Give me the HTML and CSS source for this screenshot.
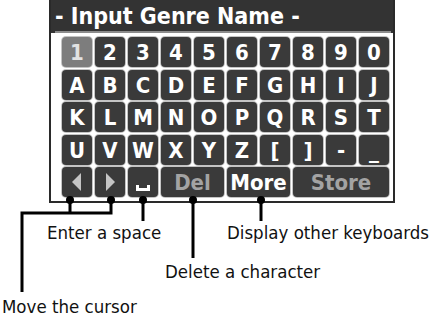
FILE: index.html
```html
<!DOCTYPE html>
<html lang="en">
<head>
  <meta charset="UTF-8" />
  <title>Input Genre Name</title>
  <link rel="stylesheet" href="styles.css">
</head>
<body>

  <div class="figure">

    <!-- Keyboard screen -->
    <div class="screen">
      <div class="title"><span class="title-text">- Input Genre Name -</span></div>

      <div class="keys">
        <div class="key selected">1</div>
        <div class="key">2</div>
        <div class="key">3</div>
        <div class="key">4</div>
        <div class="key">5</div>
        <div class="key">6</div>
        <div class="key">7</div>
        <div class="key">8</div>
        <div class="key">9</div>
        <div class="key">0</div>

        <div class="key">A</div>
        <div class="key">B</div>
        <div class="key">C</div>
        <div class="key">D</div>
        <div class="key">E</div>
        <div class="key">F</div>
        <div class="key">G</div>
        <div class="key">H</div>
        <div class="key">I</div>
        <div class="key">J</div>

        <div class="key">K</div>
        <div class="key">L</div>
        <div class="key">M</div>
        <div class="key">N</div>
        <div class="key">O</div>
        <div class="key">P</div>
        <div class="key">Q</div>
        <div class="key">R</div>
        <div class="key">S</div>
        <div class="key">T</div>

        <div class="key">U</div>
        <div class="key">V</div>
        <div class="key">W</div>
        <div class="key">X</div>
        <div class="key">Y</div>
        <div class="key">Z</div>
        <div class="key">[</div>
        <div class="key">]</div>
        <div class="key">-</div>
        <div class="key underscore">_</div>

        <div class="key icon">
          <svg width="10" height="18" viewBox="0 0 10 18"><polygon points="9,0 9,18 0,9" fill="#c4c4c4"/></svg>
        </div>
        <div class="key icon">
          <svg width="10" height="18" viewBox="0 0 10 18"><polygon points="1,0 1,18 10,9" fill="#c4c4c4"/></svg>
        </div>
        <div class="key icon space">
          <svg width="14" height="6" viewBox="0 0 14 6"><path d="M1.5 0 V4.5 H12.5 V0" fill="none" stroke="#fff" stroke-width="3"/></svg>
        </div>
        <div class="key wide2 disabled">Del</div>
        <div class="key wide2">More</div>
        <div class="key wide3 disabled">Store</div>
      </div>
    </div>

    <!-- Callout lines -->
    <svg class="callouts" width="436" height="320" viewBox="0 0 436 320">
      <g fill="none" stroke="#000" stroke-width="3">
        <path d="M70 200 V213 M111 200 V213 M20.5 213 H112.5 M22 211.5 V292"/>
        <path d="M143 200 V221"/>
        <path d="M193 200 V258"/>
        <path d="M261 200 V221"/>
      </g>
      <g fill="#000">
        <circle cx="70" cy="200" r="4"/>
        <circle cx="111" cy="200" r="4"/>
        <circle cx="143" cy="200" r="4"/>
        <circle cx="193" cy="200" r="4"/>
        <circle cx="261" cy="200" r="4"/>
      </g>
    </svg>

    <div class="label label-space">Enter a space</div>
    <div class="label label-more">Display other keyboards</div>
    <div class="label label-del">Delete a character</div>
    <div class="label label-cursor">Move the cursor</div>
  </div>

</body>
</html>
```

FILE: styles.css
```css
body {
  margin: 0;
  padding: 0;
  background: #ffffff;
  font-family: 'DejaVu Sans Condensed', 'DejaVu Sans', sans-serif;
}

.figure {
  position: relative;
  width: 436px;
  height: 320px;
  overflow: hidden;
}

.screen {
  margin-left: 49px;
  width: 346px;
  box-sizing: border-box;
  border: 2px solid #2a2a2a;
  border-top: none;
  background: #ffffff;
}

.title {
  height: 33px;
  background: #333333;
  padding: 0 2px 0 4px;
  box-sizing: border-box;
}

.title-text {
  display: block;
  height: 31px;
  line-height: 32px;
  border-bottom: 2px solid #8c8c8c;
  color: #ffffff;
  font-size: 23px;
  font-weight: bold;
  white-space: nowrap;
  overflow: hidden;
}

.keys {
  display: grid;
  grid-template-columns: repeat(10, 30px);
  grid-auto-rows: 30px;
  column-gap: 3px;
  row-gap: 2.5px;
  padding: 4px 0 0 11px;
  height: 164px;
}

.key {
  background: #3a3a3a;
  border-radius: 4px;
  box-shadow: 0 0 0 1px #c4c4c4;
  color: #ffffff;
  font-size: 22px;
  font-weight: bold;
  line-height: 31px;
  text-align: center;
}

.key.selected {
  background: #7d7d7d;
  color: #e2e2e2;
}

.key.disabled {
  color: #a3a3a3;
}

.key.icon {
  display: flex;
  align-items: center;
  justify-content: center;
}

.key.space {
  align-items: flex-end;
  padding-bottom: 6px;
  box-sizing: border-box;
}

.key.wide2 {
  grid-column: span 2;
}

.key.wide3 {
  grid-column: span 3;
}

.callouts {
  position: absolute;
  left: 0;
  top: 0;
  pointer-events: none;
}

.label {
  position: absolute;
  font-size: 18.5px;
  line-height: 24px;
  color: #111111;
  white-space: nowrap;
}

.label-space {
  left: 47px;
  top: 221px;
}

.label-more {
  left: 227px;
  top: 221px;
}

.label-del {
  left: 165px;
  top: 260px;
}

.label-cursor {
  left: 2px;
  top: 295px;
}
```
